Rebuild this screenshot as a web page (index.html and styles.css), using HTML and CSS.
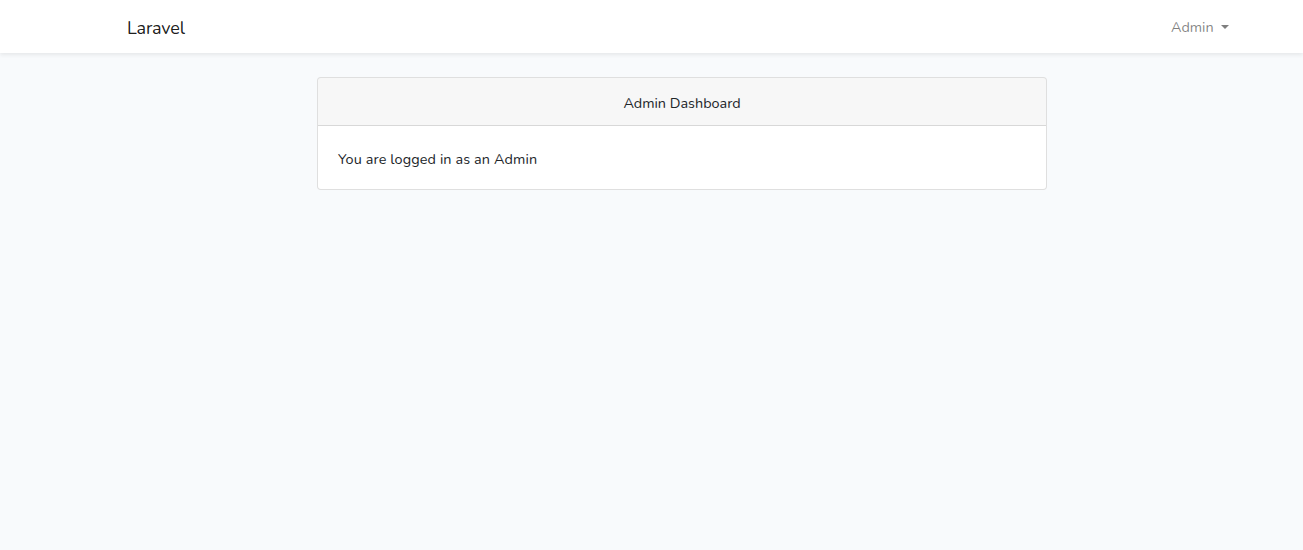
FILE: index.html
```html
<!DOCTYPE html>
<html lang="en">
<head>
<meta charset="utf-8">
<title>Laravel</title>
<link rel="stylesheet" href="styles.css">
</head>
<body>
<div class="app">
  <nav class="navbar">
    <div class="container nav-inner">
      <a class="brand" href="#">Laravel</a>
      <a class="nav-link" href="#">Admin <span class="caret"></span></a>
    </div>
  </nav>
  <main class="main">
    <div class="container">
      <div class="row">
        <div class="col">
          <div class="card">
            <div class="card-header">Admin Dashboard</div>
            <div class="card-body">You are logged in as an Admin</div>
          </div>
        </div>
      </div>
    </div>
  </main>
</div>
</body>
</html>
```

FILE: styles.css
```css
* { box-sizing: border-box; }
html, body { margin: 0; height: 100%; }
body {
  background: #f8fafc;
  font-family: "Nunito", "Lato", "Open Sans", sans-serif;
  font-size: 14.4px;
  line-height: 1.6;
  color: #212529;
}
a { text-decoration: none; }
.container {
  width: 1140px;
  margin-left: 112px;
  padding: 0 15px;
}
.navbar {
  background: #fff;
  height: 53px;
  box-shadow: 0 .125rem .25rem rgba(0,0,0,.075);
  display: flex;
  align-items: center;
}
.nav-inner {
  display: flex;
  align-items: center;
  justify-content: space-between;
}
.brand {
  color: rgba(0,0,0,.9);
  font-size: 18px;
  line-height: 28.8px;
  padding-top: 3px;
  letter-spacing: -0.2px;
}
.nav-link {
  color: rgba(0,0,0,.5);
  padding: 0 8px;
  line-height: 23px;
  margin-top: 3px;
}
.caret {
  display: inline-block;
  margin-left: .255em;
  vertical-align: .255em;
  border-top: .3em solid;
  border-right: .3em solid transparent;
  border-left: .3em solid transparent;
}
.main { padding: 24px 0; }
.row {
  display: flex;
  justify-content: center;
  margin: 0 -15px;
}
.col {
  width: 760px;
  padding: 0 15px;
}
.card {
  background: #fff;
  border: 1px solid rgba(0,0,0,.125);
  border-radius: 4px;
  overflow: hidden;
}
.card-header {
  background: rgba(0,0,0,.03);
  border-bottom: 1px solid rgba(0,0,0,.125);
  padding: 14px 20px 10px;
  text-align: center;
}
.card-body {
  padding: 22px 20px 18px;
  letter-spacing: 0.12px;
}
```
